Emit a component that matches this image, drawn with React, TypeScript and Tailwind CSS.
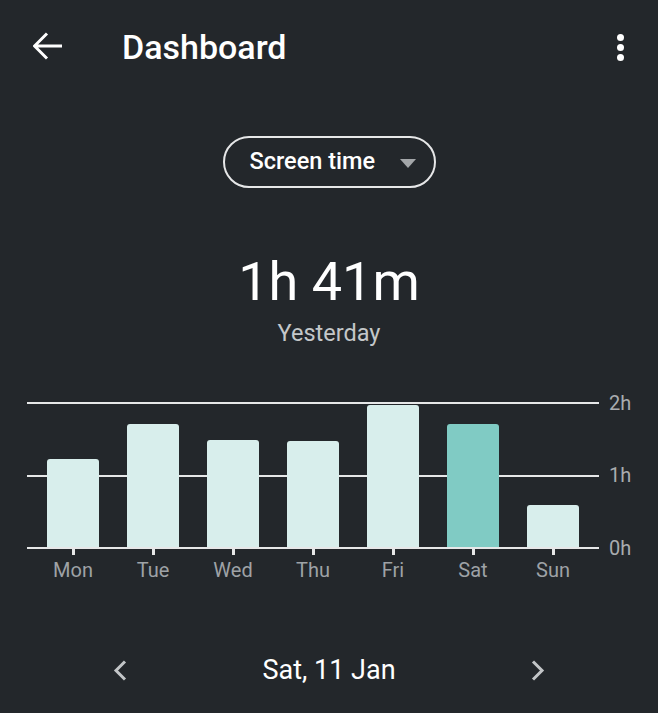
import React from "react";

const days = [
    { name: "Mon", h: 88 },
    { name: "Tue", h: 123 },
    { name: "Wed", h: 107 },
    { name: "Thu", h: 106 },
    { name: "Fri", h: 142 },
    { name: "Sat", h: 123, active: true },
    { name: "Sun", h: 42 },
];

const App = () => {
    return (
        <div className="min-h-[713px] w-full bg-[#23272b] text-white font-['Roboto',sans-serif]">
            {/* Top bar */}
            <div className="flex items-center h-[94px] pl-[33px] pr-[34px]">
                <svg width="30" height="30" viewBox="0 0 30 30" className="shrink-0">
                    <path d="M29 14H2M14 1.5L1.5 14L14 26.5" fill="none" stroke="white" strokeWidth="3" />
                </svg>
                <h1 className="ml-[59px] text-[34px] font-medium leading-none">Dashboard</h1>
                <div className="ml-auto flex flex-col items-center gap-[3px]">
                    <span className="w-[7px] h-[7px] rounded-full bg-white" />
                    <span className="w-[7px] h-[7px] rounded-full bg-white" />
                    <span className="w-[7px] h-[7px] rounded-full bg-white" />
                </div>
            </div>

            {/* Metric selector */}
            <div className="flex justify-center mt-[42px]">
                <button className="flex items-center w-[213px] h-[52px] rounded-full border-2 border-[#e6e7e8] pl-[25px] pr-[18px]">
                    <span className="text-[23.5px] font-medium leading-none">Screen time</span>
                    <svg width="16" height="9" viewBox="0 0 16 9" className="ml-auto mt-[2px]">
                        <path d="M0 0H16L8 9Z" fill="#a3a6a9" />
                    </svg>
                </button>
            </div>

            {/* Total */}
            <div className="flex flex-col items-center mt-[67px]">
                <div className="text-[54px] leading-none">1h 41m</div>
                <div className="mt-[13px] text-[23.5px] leading-none text-[#c4c7c9]">Yesterday</div>
            </div>

            {/* Chart */}
            <div className="flex mt-[56px] pl-[27px]">
                <div className="w-[572px]">
                    <div className="relative h-[147px]">
                        <div className="absolute left-0 right-0 top-0 h-[2px] bg-[#e6e7e8]" />
                        <div className="absolute left-0 right-0 top-[73px] h-[2px] bg-[#e6e7e8]" />
                        <div className="absolute left-0 right-0 bottom-0 h-[2px] bg-[#e6e7e8]" />
                        <div className="relative flex items-end h-[145px] ml-[6px]">
                            {days.map((d) => (
                                <div key={d.name} className="w-[80px] flex justify-center">
                                    <div
                                        className={`w-[52px] rounded-t-[3px] ${d.active ? "bg-[#80cbc4]" : "bg-[#d8eeec]"}`}
                                        style={{ height: d.h }}
                                    />
                                </div>
                            ))}
                        </div>
                    </div>
                    <div className="flex ml-[6px]">
                        {days.map((d) => (
                            <div key={d.name} className="w-[80px] flex flex-col items-center">
                                <div className="w-[3px] h-[6px] bg-[#e6e7e8]" />
                                <div className="mt-[5px] text-[20px] leading-none text-[#9ea2a6]">{d.name}</div>
                            </div>
                        ))}
                    </div>
                </div>
                <div className="flex flex-col justify-between h-[165px] ml-[10px] -mt-[9px] text-[20px] leading-none text-[#a9acaf]">
                    <span>2h</span>
                    <span>1h</span>
                    <span>0h</span>
                </div>
            </div>

            {/* Date navigation */}
            <div className="flex items-center mt-[77px] pl-[113px] pr-[113px]">
                <svg width="14" height="21" viewBox="0 0 14 21">
                    <path d="M12 1.5L3 10.5L12 19.5" fill="none" stroke="#c2c5c7" strokeWidth="3" />
                </svg>
                <div className="flex-1 text-center text-[27px] leading-none">Sat, 11 Jan</div>
                <svg width="14" height="21" viewBox="0 0 14 21">
                    <path d="M2 1.5L11 10.5L2 19.5" fill="none" stroke="#c2c5c7" strokeWidth="3" />
                </svg>
            </div>
        </div>
    );
};

export default App;
